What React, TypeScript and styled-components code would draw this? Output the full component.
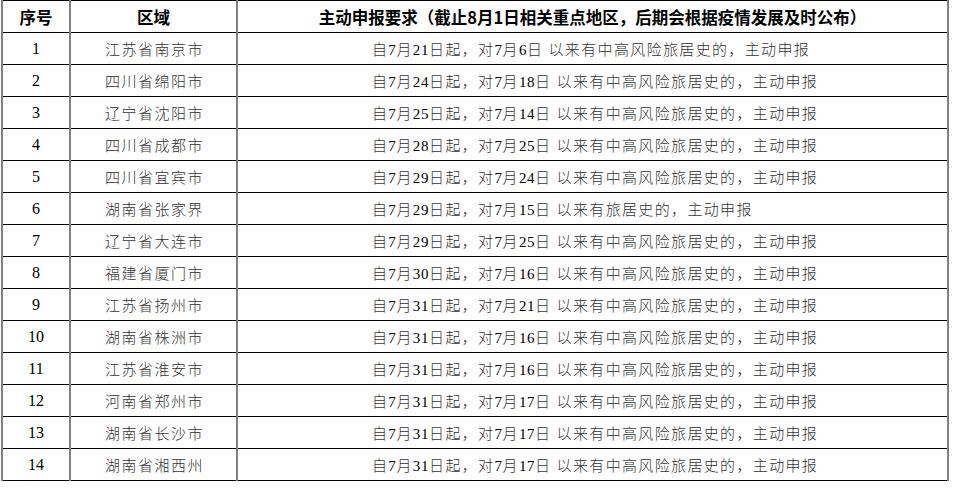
import React from 'react';
import styled, { createGlobalStyle } from 'styled-components';

const GlobalStyle = createGlobalStyle`
  html, body {
    margin: 0;
    padding: 0;
    background: #ffffff;
  }
`;

const Pagina = styled.div`
  padding: 0 0 0 1px;
`;

const Tabela = styled.table`
  width: 948px;
  table-layout: fixed;
  border-collapse: collapse;
  font-family: "Liberation Serif", "Noto Sans CJK SC", serif;
`;

const Celula = styled.td`
  height: 31px;
  padding: 0;
  border-top: 1px solid #000000;
  border-bottom: 1px solid #000000;
  border-left: 2px solid #808080;
  border-right: 2px solid #808080;
  vertical-align: middle;
  white-space: nowrap;
`;

const Cabecalho = styled(Celula).attrs({ as: 'th' })`
  font-family: "Noto Sans CJK SC", sans-serif;
  font-weight: 700;
  font-size: 16.5px;
  color: #000000;
  text-align: center;
`;

const Numero = styled(Celula)`
  font-size: 16px;
  color: #000000;
  text-align: center;
`;

const Regiao = styled(Celula)`
  font-size: 15px;
  font-weight: 300;
  letter-spacing: 1.5px;
  color: #333333;
  text-align: center;
  padding-left: 2px;
`;

const Requisito = styled(Celula)`
  font-size: 15px;
  font-weight: 300;
  letter-spacing: 1.35px;
  color: #333333;
  text-align: left;
  padding-left: 134px;
`;

const Digito = styled.span`
  color: #000000;
  font-weight: 400;
  letter-spacing: 0.6px;
`;

interface Linha {
    regiao: string;
    inicio: string;
    desde: string;
    semRisco?: boolean;
}

const linhas: Linha[] = [
    { regiao: '江苏省南京市', inicio: '21', desde: '6' },
    { regiao: '四川省绵阳市', inicio: '24', desde: '18' },
    { regiao: '辽宁省沈阳市', inicio: '25', desde: '14' },
    { regiao: '四川省成都市', inicio: '28', desde: '25' },
    { regiao: '四川省宜宾市', inicio: '29', desde: '24' },
    { regiao: '湖南省张家界', inicio: '29', desde: '15', semRisco: true },
    { regiao: '辽宁省大连市', inicio: '29', desde: '25' },
    { regiao: '福建省厦门市', inicio: '30', desde: '16' },
    { regiao: '江苏省扬州市', inicio: '31', desde: '21' },
    { regiao: '湖南省株洲市', inicio: '31', desde: '16' },
    { regiao: '江苏省淮安市', inicio: '31', desde: '16' },
    { regiao: '河南省郑州市', inicio: '31', desde: '17' },
    { regiao: '湖南省长沙市', inicio: '31', desde: '17' },
    { regiao: '湖南省湘西州', inicio: '31', desde: '17' },
];

export default function App() {
    return (
        <>
            <GlobalStyle />
            <Pagina>
                <Tabela>
                    <colgroup>
                        <col style={{ width: 68 }} />
                        <col style={{ width: 167 }} />
                        <col />
                    </colgroup>
                    <thead>
                        <tr>
                            <Cabecalho>序号</Cabecalho>
                            <Cabecalho>区域</Cabecalho>
                            <Cabecalho>主动申报要求（截止8月1日相关重点地区，后期会根据疫情发展及时公布）</Cabecalho>
                        </tr>
                    </thead>
                    <tbody>
                        {linhas.map((linha, i) => (
                            <tr key={i}>
                                <Numero>{i + 1}</Numero>
                                <Regiao>{linha.regiao}</Regiao>
                                <Requisito>
                                    自<Digito>7</Digito>月<Digito>{linha.inicio}</Digito>日起，对<Digito>7</Digito>月<Digito>{linha.desde}</Digito>日 以来有{linha.semRisco ? '' : '中高风险'}旅居史的，主动申报
                                </Requisito>
                            </tr>
                        ))}
                    </tbody>
                </Tabela>
            </Pagina>
        </>
    );
}
